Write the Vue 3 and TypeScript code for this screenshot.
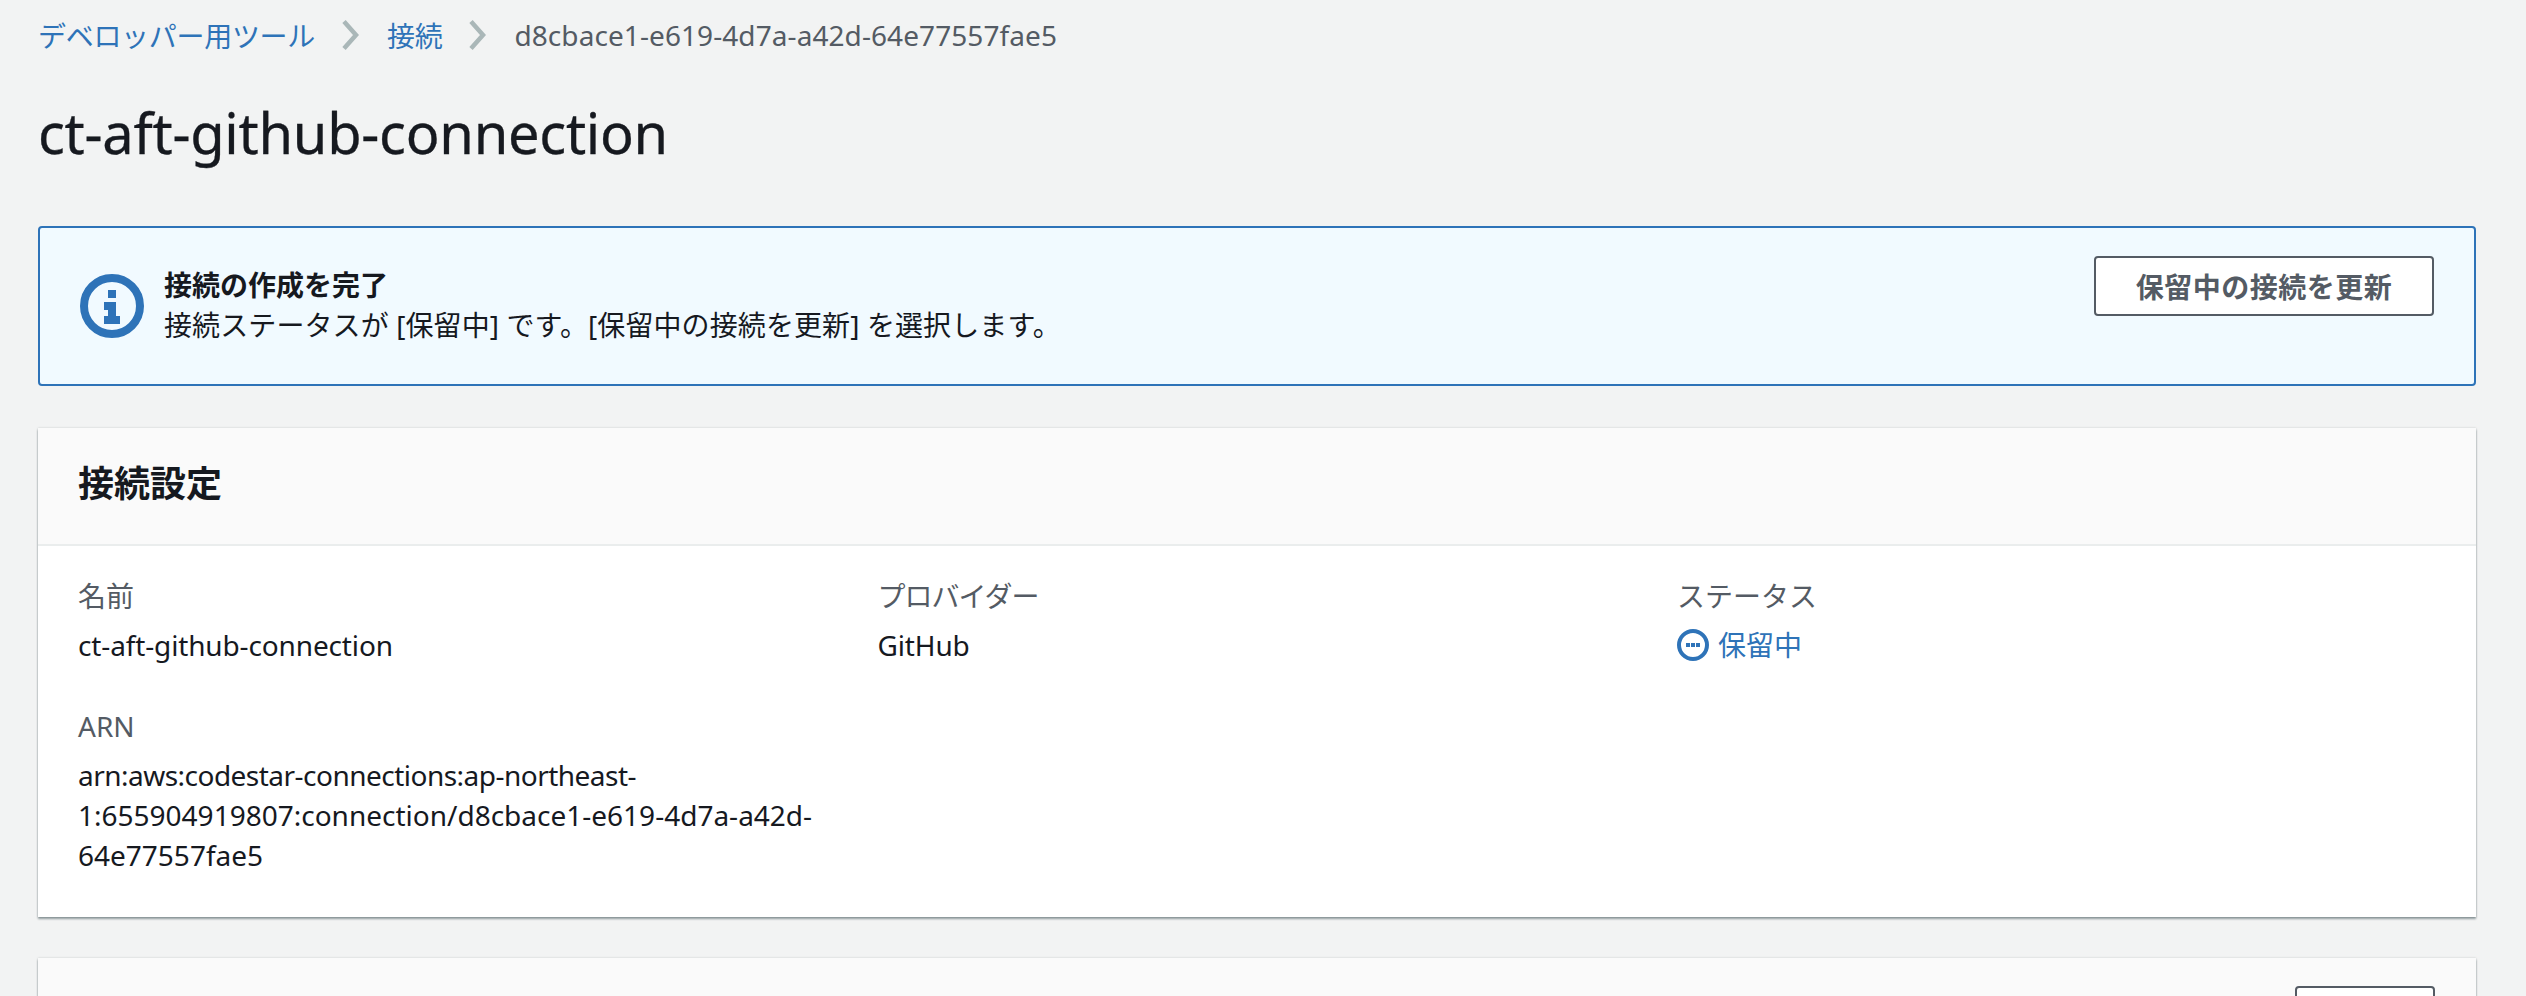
<script setup lang="ts">
const crumbs: string[] = ['デベロッパー用ツール', '接続']
</script>

<template>
  <div class="page">
    <nav class="crumbs">
      <template v-for="c in crumbs" :key="c">
        <a class="link">{{ c }}</a>
        <svg class="chev" width="18" height="30" viewBox="0 0 18 30"><path d="M3 1.5l12 13.5L3 28.5" fill="none" stroke="#aab7b8" stroke-width="4.5" /></svg>
      </template>
      <span class="current">d8cbace1-e619-4d7a-a42d-64e77557fae5</span>
    </nav>
    <h1 class="title">ct-aft-github-connection</h1>

    <section class="banner">
      <svg class="info" width="64" height="64" viewBox="0 0 64 64">
        <circle cx="32" cy="32" r="28" fill="none" stroke="#2e73b8" stroke-width="8" />
        <path d="M28 16h8v8h-8zM24 28h12v14h4v8H24v-8h4v-6h-4z" fill="#2e73b8" />
      </svg>
      <div class="msg">
        <div class="msg-title">接続の作成を完了</div>
        <div class="msg-body">接続ステータスが [保留中] です。[保留中の接続を更新] を選択します。</div>
      </div>
      <button class="btn">保留中の接続を更新</button>
    </section>

    <section class="card">
      <header class="card-head"><h2>接続設定</h2></header>
      <div class="grid">
        <div class="field">
          <div class="label">名前</div>
          <div class="value">ct-aft-github-connection</div>
        </div>
        <div class="field">
          <div class="label tight">プロバイダー</div>
          <div class="value">GitHub</div>
        </div>
        <div class="field">
          <div class="label">ステータス</div>
          <div class="value status">
            <svg width="32" height="32" viewBox="0 0 32 32">
              <circle cx="16" cy="16" r="14" fill="none" stroke="#2e73b8" stroke-width="4" />
              <path d="M9 14h4v4H9zM14 14h4v4h-4zM19 14h4v4h-4z" fill="#2e73b8" />
            </svg>
            <span>保留中</span>
          </div>
        </div>
        <div class="field arn">
          <div class="label">ARN</div>
          <div class="value arn-value"><span class="arn-head">arn:aws:codestar-connections:ap-northeast-</span>1:655904919807:connection/d8cbace1-e619-4d7a-a42d-64e77557fae5</div>
        </div>
      </div>
    </section>

    <section class="card next">
      <header class="next-head"><button class="btn small"></button></header>
    </section>
  </div>
</template>

<style>
html, body { margin: 0; background: #f2f3f3; overflow: hidden; }
</style>

<style scoped>
.page {
  height: 996px;
  box-sizing: border-box;
  overflow: hidden;
  padding: 0 50px 0 38px;
  background: #f2f3f3;
  font-family: "Noto Sans", "Noto Sans CJK JP", sans-serif;
  font-size: 28px;
  color: #16191f;
}
.crumbs { display: flex; align-items: center; height: 70px; margin-bottom: 2px; }
.link { color: #2e73b8; letter-spacing: -0.3px; }
.chev { margin: 0 28px 0 26px; }
.current { color: #545b64; letter-spacing: 0.08px; }
.title {
  margin: 0;
  height: 154px;
  padding-top: 30px;
  box-sizing: border-box;
  font-size: 56px;
  line-height: 60px;
  font-weight: 400;
  letter-spacing: -0.27px;
  -webkit-text-stroke: 0.3px #16191f;
}
.banner {
  display: flex;
  align-items: flex-start;
  height: 160px;
  box-sizing: border-box;
  border: 2px solid #2e73b8;
  border-radius: 4px;
  background: #f1faff;
  padding: 28px 40px 0 40px;
}
.info { margin-top: 18px; flex: none; }
.msg { flex: 1; margin: 9px 0 0 20px; line-height: 40px; }
.msg-title { font-weight: 700; }
.msg-body { letter-spacing: 0.1px; }
.btn {
  width: 340px;
  height: 60px;
  box-sizing: border-box;
  border: 2px solid #545b64;
  border-radius: 4px;
  background: #fff;
  color: #545b64;
  font: 700 28px "Noto Sans", "Noto Sans CJK JP", sans-serif;
  letter-spacing: 0.5px;
  padding: 0;
}
.card {
  margin-top: 42px;
  height: 489px;
  box-sizing: border-box;
  background: #fff;
  box-shadow: 0 2px 2px rgba(0, 28, 36, 0.4), 0 0 2px rgba(0, 28, 36, 0.18);
}
.card-head {
  height: 118px;
  box-sizing: border-box;
  padding: 0 40px 10px;
  display: flex;
  align-items: center;
  background: #fafafa;
  border-bottom: 2px solid #eaeded;
}
.card-head h2 { margin: 0; font-size: 36px; font-weight: 700; }
.grid {
  display: grid;
  grid-template-columns: repeat(3, 799.5px);
  padding: 28px 40px 0;
  row-gap: 39px;
}
.label { color: #545b64; line-height: 44px; }
.tight { letter-spacing: -1px; }
.value { margin-top: 7px; line-height: 40px; letter-spacing: -0.14px; }
.arn { grid-column: 1; width: 800px; }
.arn-value { letter-spacing: 0; }
.arn-head { display: block; letter-spacing: -0.52px; }
.status { display: flex; align-items: center; gap: 9px; color: #2e73b8; letter-spacing: 0; }
.next {
  margin-top: 41px;
  height: 120px;
  background: #fafafa;
}
.next-head { display: flex; justify-content: flex-end; padding: 28px 41px 0; }
.small { width: 140px; height: 60px; }
</style>
